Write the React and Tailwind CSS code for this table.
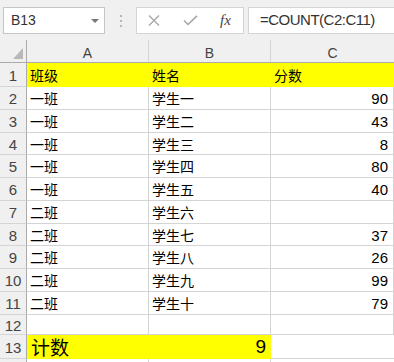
import React from 'react';

const rows = [
  { n: 1, h: 'h-[24px]', a: '班级', b: '姓名', c: '分数', fill: true },
  { n: 2, h: 'h-[23px]', a: '一班', b: '学生一', c: '90' },
  { n: 3, h: 'h-[23px]', a: '一班', b: '学生二', c: '43' },
  { n: 4, h: 'h-[22px]', a: '一班', b: '学生三', c: '8' },
  { n: 5, h: 'h-[23px]', a: '一班', b: '学生四', c: '80' },
  { n: 6, h: 'h-[23px]', a: '一班', b: '学生五', c: '40' },
  { n: 7, h: 'h-[23px]', a: '二班', b: '学生六', c: '' },
  { n: 8, h: 'h-[22px]', a: '二班', b: '学生七', c: '37' },
  { n: 9, h: 'h-[23px]', a: '二班', b: '学生八', c: '26' },
  { n: 10, h: 'h-[23px]', a: '二班', b: '学生九', c: '99' },
  { n: 11, h: 'h-[23px]', a: '二班', b: '学生十', c: '79' },
  { n: 12, h: 'h-[20px]', a: '', b: '', c: '' },
];

const RowHead = ({ n }) => (
  <div className="w-[27px] shrink-0 flex items-center justify-center pt-[3px] bg-[#f0f0f0] border-r border-b border-r-[#ababab] border-b-[#d4d4d4] text-[15px] text-[#444]">
    {n}
  </div>
);

const Cell = ({ w, fill, right, children }) => (
  <div
    className={`${w} shrink-0 flex items-center pt-[3px] border-b border-r ${
      fill ? 'bg-[#ffff00] border-[#ffff00]' : 'border-[#d4d4d4]'
    } ${right ? 'justify-end pr-[5px] text-[15px]' : 'pl-[3px] text-[14px]'} text-black`}
  >
    {children}
  </div>
);

const App = () => {
  return (
    <div className="w-[394px] h-[362px] overflow-hidden bg-white font-['Liberation_Sans','Noto_Sans_CJK_SC',sans-serif]">
      {/* name box + formula bar */}
      <div className="h-[40px] bg-[#f0f0f0] flex items-start pt-[7px]">
        <div className="ml-[3px] w-[102px] h-[27px] bg-white border border-[#c6c6c6] flex items-center justify-between pl-[7px] pr-[5px]">
          <span className="text-[14px] text-[#333]">B13</span>
          <svg width="8" height="4" viewBox="0 0 8 4">
            <path d="M0 0h8L4 4z" fill="#777" />
          </svg>
        </div>
        <div className="w-[31px] h-[27px] flex flex-col items-center justify-center gap-[3px]">
          <div className="w-[2px] h-[2px] bg-[#b5b5b5]" />
          <div className="w-[2px] h-[2px] bg-[#b5b5b5]" />
          <div className="w-[2px] h-[2px] bg-[#b5b5b5]" />
        </div>
        <div className="w-[108px] h-[27px] bg-white border border-[#d4d4d4] flex items-center pl-[11px]">
          <svg width="12" height="11" viewBox="0 0 12 11">
            <path d="M1 0.5L11 10.5M11 0.5L1 10.5" stroke="#a6a6a6" strokeWidth="1.3" />
          </svg>
          <svg className="ml-[23px]" width="15" height="11" viewBox="0 0 15 11">
            <path d="M1 5.5L5 9.5L14 0.8" stroke="#a6a6a6" strokeWidth="1.6" fill="none" />
          </svg>
          <span className="ml-[22px] font-['Liberation_Serif',serif] italic text-[15px] text-[#444]">fx</span>
        </div>
        <div className="ml-[4px] flex-1 h-[27px] bg-white border border-r-0 border-[#d4d4d4] flex items-center pl-[11px]">
          <span className="text-[15px] tracking-[-0.5px] text-[#333]">=COUNT(C2:C11)</span>
        </div>
      </div>

      {/* column headers */}
      <div className="flex h-[23px] bg-[#f0f0f0] border-b border-[#ababab]">
        <div className="w-[27px] shrink-0 border-r border-[#ababab] relative">
          <svg className="absolute left-[13px] top-[8px]" width="11" height="12" viewBox="0 0 11 12">
            <path d="M0 11L10 11L10 0z" fill="#b8b8b8" />
          </svg>
        </div>
        <div className="w-[122px] shrink-0 flex items-center justify-center pt-[4px] border-r border-[#d4d4d4] text-[14px] text-[#444]">A</div>
        <div className="w-[122px] shrink-0 flex items-center justify-center pt-[4px] border-r border-[#d4d4d4] text-[14px] text-[#444]">B</div>
        <div className="flex-1 flex items-center justify-center pt-[4px] text-[14px] text-[#444]">C</div>
      </div>

      {/* data rows */}
      {rows.map((r) => (
        <div key={r.n} className={`flex ${r.h}`}>
          <RowHead n={r.n} />
          <Cell w="w-[122px]" fill={r.fill}>{r.a}</Cell>
          <Cell w="w-[122px]" fill={r.fill}>{r.b}</Cell>
          <Cell w="flex-1" fill={r.fill} right={!r.fill}>{r.c}</Cell>
        </div>
      ))}

      {/* count row */}
      <div className="flex h-[24px]">
        <RowHead n={13} />
        <div className="w-[122px] shrink-0 flex items-center pt-[5px] pl-[4px] bg-[#ffff00] border-b border-r border-[#ffff00] text-[19px] text-black">
          计数
        </div>
        <div className="w-[122px] shrink-0 flex items-center justify-end pt-[1px] pr-[4px] bg-[#ffff00] border-b border-r border-[#ffff00] text-[19px] text-black">
          9
        </div>
        <div className="flex-1 border-b border-[#d4d4d4]" />
      </div>

      <div className="flex h-[10px]">
        <div className="w-[27px] shrink-0 bg-[#f0f0f0] border-r border-[#ababab]" />
        <div className="w-[122px] shrink-0 border-r border-[#d4d4d4]" />
        <div className="w-[122px] shrink-0 border-r border-[#d4d4d4]" />
        <div className="flex-1" />
      </div>
    </div>
  );
};

export default App;
